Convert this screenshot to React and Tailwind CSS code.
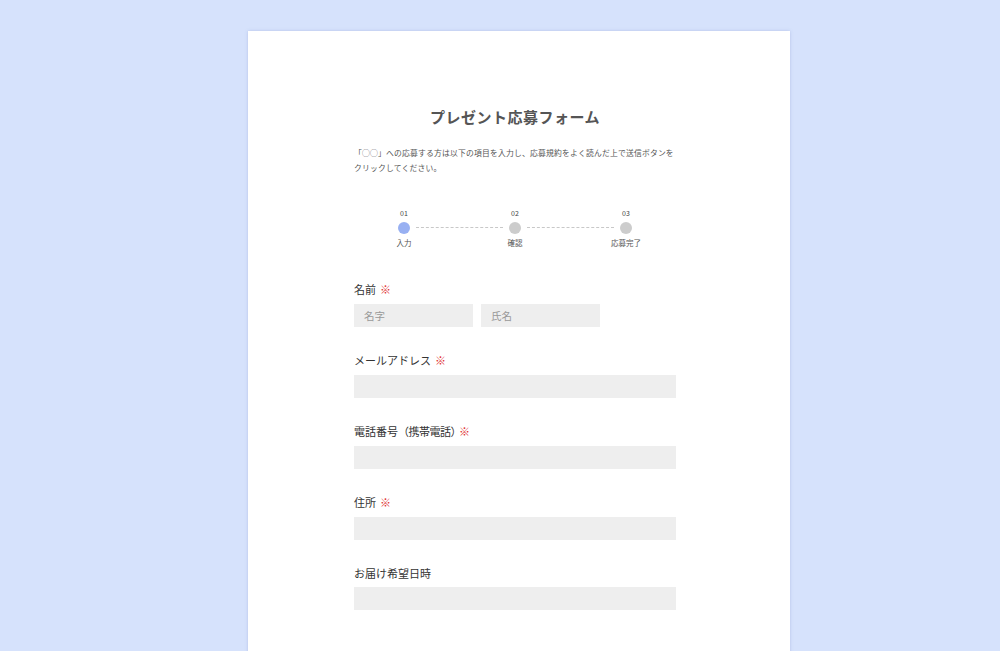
export default function App() {
  const font = { fontFamily: '"Noto Sans CJK JP", "Noto Sans", sans-serif' };
  const Req = () => <span className="text-[#e0312f] ml-[4px]">※</span>;
  return (
    <div className="w-[1000px] h-[651px] bg-[#d6e2fc] overflow-hidden flex justify-start" style={font}>
      <div className="ml-[248px] mt-[31px] w-[542px] h-[700px] bg-white shadow-[0_0_3px_rgba(120,140,200,0.35)] pl-[106px]">
        <div className="w-[322px]">
          <h1 className="mt-[75px] text-center text-[15px] font-bold leading-[22px] text-[#555] tracking-[0.5px]">プレゼント応募フォーム</h1>
          <p className="mt-[17px] text-[7.8px] leading-[15px] text-[#555] tracking-[0.2px]">
            「◯◯」への応募する方は以下の項目を入力し、応募規約をよく読んだ上で送信ボタンをクリックしてください。
          </p>
          <div className="mt-[33px] flex items-start justify-between px-[38px]">
            <div className="flex flex-col items-center w-[24px]">
              <span className="text-[7px] leading-[10px] text-[#444]">01</span>
              <span className="mt-[4px] w-[12px] h-[12px] rounded-full bg-[#98b0f2]"></span>
              <span className="mt-[4px] text-[7.5px] leading-[10px] text-[#555] whitespace-nowrap">入力</span>
            </div>
            <div className="flex-1 mt-[19px] border-t border-dashed border-[#c8c8c8]"></div>
            <div className="flex flex-col items-center w-[24px]">
              <span className="text-[7px] leading-[10px] text-[#444]">02</span>
              <span className="mt-[4px] w-[12px] h-[12px] rounded-full bg-[#cccccc]"></span>
              <span className="mt-[4px] text-[7.5px] leading-[10px] text-[#555] whitespace-nowrap">確認</span>
            </div>
            <div className="flex-1 mt-[19px] border-t border-dashed border-[#c8c8c8]"></div>
            <div className="flex flex-col items-center w-[24px]">
              <span className="text-[7px] leading-[10px] text-[#444]">03</span>
              <span className="mt-[4px] w-[12px] h-[12px] rounded-full bg-[#cccccc]"></span>
              <span className="mt-[4px] text-[7.5px] leading-[10px] text-[#555] whitespace-nowrap">応募完了</span>
            </div>
          </div>

          <div className="mt-[34px] flex flex-col gap-[26px]">
            <div>
              <div className="text-[11px] leading-[14px] text-[#333]">名前<Req /></div>
              <div className="mt-[8px] flex gap-[8px]">
                <div className="w-[119px] h-[23px] bg-[#eeeeee] flex items-center pl-[10px] text-[10.5px] text-[#999]">名字</div>
                <div className="w-[119px] h-[23px] bg-[#eeeeee] flex items-center pl-[10px] text-[10.5px] text-[#999]">氏名</div>
              </div>
            </div>
            <div>
              <div className="text-[11px] leading-[14px] text-[#333]">メールアドレス<Req /></div>
              <div className="mt-[8px] h-[23px] bg-[#eeeeee]"></div>
            </div>
            <div>
              <div className="text-[11px] leading-[14px] text-[#333]">電話番号<span className="tracking-[-0.5px]">（携帯電話）</span><span className="text-[#e0312f] -ml-[2px]">※</span></div>
              <div className="mt-[8px] h-[23px] bg-[#eeeeee]"></div>
            </div>
            <div>
              <div className="text-[11px] leading-[14px] text-[#333]">住所<Req /></div>
              <div className="mt-[8px] h-[23px] bg-[#eeeeee]"></div>
            </div>
            <div>
              <div className="text-[11px] leading-[14px] text-[#333]">お届け希望日時</div>
              <div className="mt-[7px] h-[23px] bg-[#eeeeee]"></div>
            </div>
          </div>
        </div>
      </div>
    </div>
  );
}
